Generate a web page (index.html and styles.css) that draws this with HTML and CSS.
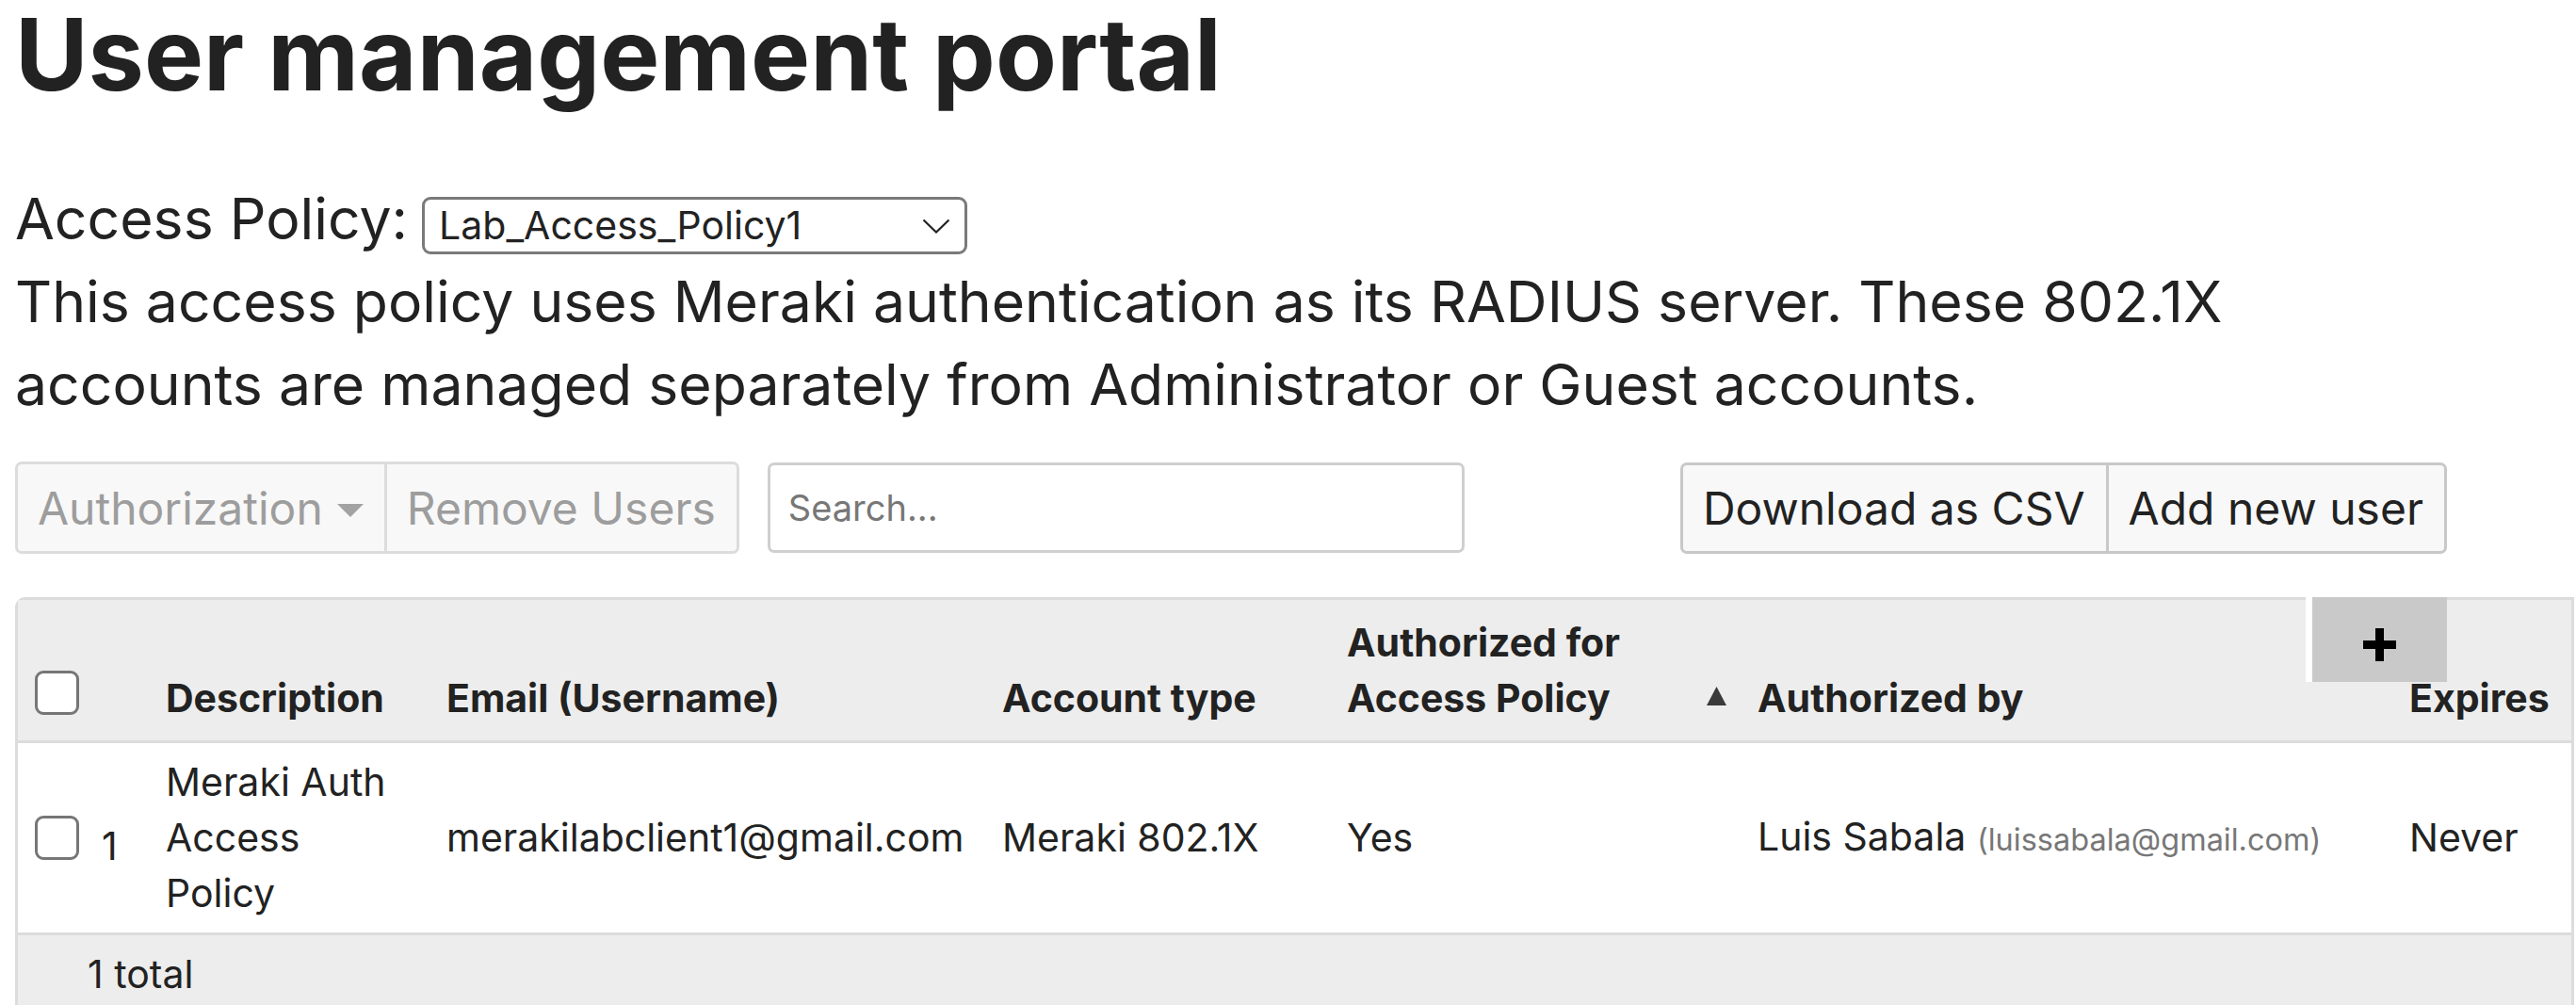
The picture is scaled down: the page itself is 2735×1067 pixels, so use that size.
FILE: index.html
```html
<!DOCTYPE html>
<html lang="en">
<head>
<meta charset="utf-8">
<title>User management portal</title>
<link rel="stylesheet" href="styles.css">
</head>
<body>
<main class="page">
  <h1 class="title">User management portal</h1>

  <div class="policy">
    <label class="policy-label" for="policy">Access Policy:</label>
    <span class="select-wrap">
      <select id="policy" class="policy-select">
        <option>Lab_Access_Policy1</option>
      </select>
      <svg class="select-chevron" width="30" height="16" viewBox="0 0 30 16" aria-hidden="true">
        <path d="M1.5 1.5 L15 14.5 L28.5 1.5" fill="none" stroke="#222" stroke-width="2.2"/>
      </svg>
    </span>
  </div>
  <p class="policy-desc">This access policy uses Meraki authentication as its RADIUS server. These 802.1X accounts are managed separately from Administrator or Guest accounts.</p>

  <div class="toolbar">
    <div class="btn-group btn-group-disabled">
      <button class="btn" disabled>Authorization<svg class="caret" width="28" height="14" viewBox="0 0 28 14" aria-hidden="true"><path d="M0 0 H28 L14 14 Z" fill="#a3a3a3"/></svg></button>
      <button class="btn btn-sep" disabled>Remove Users</button>
    </div>
    <input class="search" type="text" placeholder="Search...">
    <div class="btn-group btn-group-actions">
      <button class="btn">Download as CSV</button>
      <button class="btn btn-sep">Add new user</button>
    </div>
  </div>

  <div class="grid-wrap">
    <table class="users">
      <colgroup>
        <col class="col-check">
        <col class="col-desc">
        <col class="col-email">
        <col class="col-type">
        <col class="col-auth">
        <col class="col-by">
        <col class="col-exp">
      </colgroup>
      <thead>
        <tr>
          <th class="cell-check"><input class="cb cb-head" type="checkbox" aria-label="Select all"></th>
          <th class="cell-desc">Description</th>
          <th>Email (Username)</th>
          <th>Account type</th>
          <th class="cell-auth">Authorized for Access Policy</th>
          <th class="cell-by-head"><svg class="sort" width="21" height="20" viewBox="0 0 21 20" aria-hidden="true"><path d="M10.5 0 L21 20 H0 Z" fill="#3a3a3a"/></svg>Authorized by</th>
          <th>Expires</th>
        </tr>
      </thead>
      <tbody>
        <tr>
          <td class="cell-check row-check"><input class="cb" type="checkbox" aria-label="Select row 1"><span class="row-num">1</span></td>
          <td class="cell-desc">Meraki Auth Access Policy</td>
          <td>merakilabclient1@gmail.com</td>
          <td>Meraki 802.1X</td>
          <td>Yes</td>
          <td class="cell-by">Luis Sabala <span class="by-email">(luissabala@gmail.com)</span></td>
          <td>Never</td>
        </tr>
      </tbody>
      <tfoot>
        <tr>
          <td class="total" colspan="7">1 total</td>
        </tr>
      </tfoot>
    </table>
    <button class="col-add" aria-label="Add column">
      <svg width="35" height="35" viewBox="0 0 35 35" aria-hidden="true">
        <rect x="13" y="0" width="9" height="35" fill="#000"/>
        <rect x="0" y="13" width="35" height="9" fill="#000"/>
      </svg>
    </button>
  </div>
</main>
</body>
</html>
```

FILE: styles.css
```css
* {
  box-sizing: border-box;
}

html, body {
  margin: 0;
  padding: 0;
  background: #fff;
}

body {
  font-family: Inter, "Liberation Sans", sans-serif;
  color: #222;
  overflow: hidden;
}

.page {
  width: 2598px;
  padding-left: 16px;
}

.title {
  margin: 0;
  font-size: 106px;
  line-height: 116px;
  font-weight: 700;
  color: #222;
}

.policy {
  margin-top: 72px;
  font-size: 60.7px;
  line-height: 88px;
}

.policy-label {
  margin-right: -2px;
}

.select-wrap {
  position: relative;
  display: inline-block;
  line-height: 0;
}

.policy-select {
  appearance: none;
  -webkit-appearance: none;
  width: 579px;
  height: 61px;
  border: 3px solid #7a7a7a;
  border-radius: 9px;
  background: #fff;
  color: #222;
  font-family: Inter, "Liberation Sans", sans-serif;
  font-size: 41px;
  padding: 0 60px 0 15px;
  margin: 0;
}

.select-chevron {
  position: absolute;
  right: 18px;
  top: 50%;
  margin-top: -7px;
  pointer-events: none;
}

.policy-desc {
  margin: 0;
  max-width: 2450px;
  font-size: 60.7px;
  line-height: 88px;
}

.toolbar {
  display: flex;
  align-items: center;
  margin-top: 38px;
}

.btn-group {
  display: flex;
  height: 98px;
  border: 3px solid #dcdcdc;
  border-radius: 7px;
  background: #f8f8f8;
  overflow: hidden;
}

.btn-group-actions {
  margin-left: auto;
  height: 97px;
  border-color: #c8c8c8;
}

.btn {
  display: flex;
  align-items: center;
  height: 100%;
  margin: 0;
  padding: 0 22px 0 21px;
  border: 0;
  background: transparent;
  font-family: Inter, "Liberation Sans", sans-serif;
  font-size: 48px;
  color: #222;
  white-space: nowrap;
}

.btn:disabled {
  color: #9d9d9d;
}

.btn-sep {
  border-left: 3px solid #dcdcdc;
}

.btn-group-actions .btn-sep {
  border-left-color: #c8c8c8;
}

.caret {
  margin-left: 15px;
  margin-top: 6px;
}

.search {
  width: 740px;
  height: 96px;
  margin-left: 30px;
  padding: 0 19px;
  border: 3px solid #cfcfcf;
  border-radius: 7px;
  font-family: Inter, "Liberation Sans", sans-serif;
  font-size: 38px;
  color: #222;
  background: #fff;
}

.search::placeholder {
  color: #777;
}

.grid-wrap {
  position: relative;
  width: 2717px;
  margin-top: 46px;
  border: 3px solid #dcdcdc;
  border-bottom: 0;
  border-radius: 11px 0 0 0;
  background: #ededed;
}

.users {
  width: 100%;
  table-layout: fixed;
  border-collapse: separate;
  border-spacing: 0;
  font-size: 41px;
  line-height: 59px;
}

.col-check { width: 157px; }
.col-desc { width: 298px; }
.col-email { width: 590px; }
.col-type { width: 366px; }
.col-auth { width: 382px; }
.col-by { width: 746px; }
.col-exp { width: 172px; }

.users th {
  padding: 16px 0 15px 0;
  text-align: left;
  vertical-align: bottom;
  font-weight: 700;
  background: #ededed;
  border-bottom: 3px solid #dcdcdc;
  white-space: normal;
}

.users td {
  padding: 12px 0;
  vertical-align: middle;
  background: #fff;
  border-bottom: 3px solid #dcdcdc;
}

.users th.cell-check,
.users td.cell-check {
  padding-left: 18px;
}

.users th.cell-desc,
.users td.cell-desc {
  padding-right: 60px;
}

.users th.cell-auth {
  padding-right: 20px;
}

.users td.cell-by {
  padding-left: 54px;
}

.sort {
  margin-right: 33px;
  vertical-align: 7px;
}

.cb {
  appearance: none;
  -webkit-appearance: none;
  width: 47px;
  height: 47px;
  margin: 0;
  border: 3px solid #767676;
  border-radius: 9px;
  background: #fff;
  vertical-align: baseline;
}

.cb-head {
  vertical-align: -3px;
}

.users td.row-check {
  line-height: 32px;
  white-space: nowrap;
}

.row-num {
  margin-left: 24px;
}

.by-email {
  font-size: 32.5px;
  color: #777;
}

.users td.total {
  padding: 12px 0 11px 74px;
  background: #ededed;
  border-bottom: 0;
}

.col-add {
  position: absolute;
  top: -3px;
  left: 2429px;
  width: 150px;
  height: 90px;
  margin: 0;
  padding: 10px 0 0 0;
  border: 0;
  border-left: 7px solid #fff;
  background: #c9c9c9;
  display: flex;
  align-items: center;
  justify-content: center;
}
```
